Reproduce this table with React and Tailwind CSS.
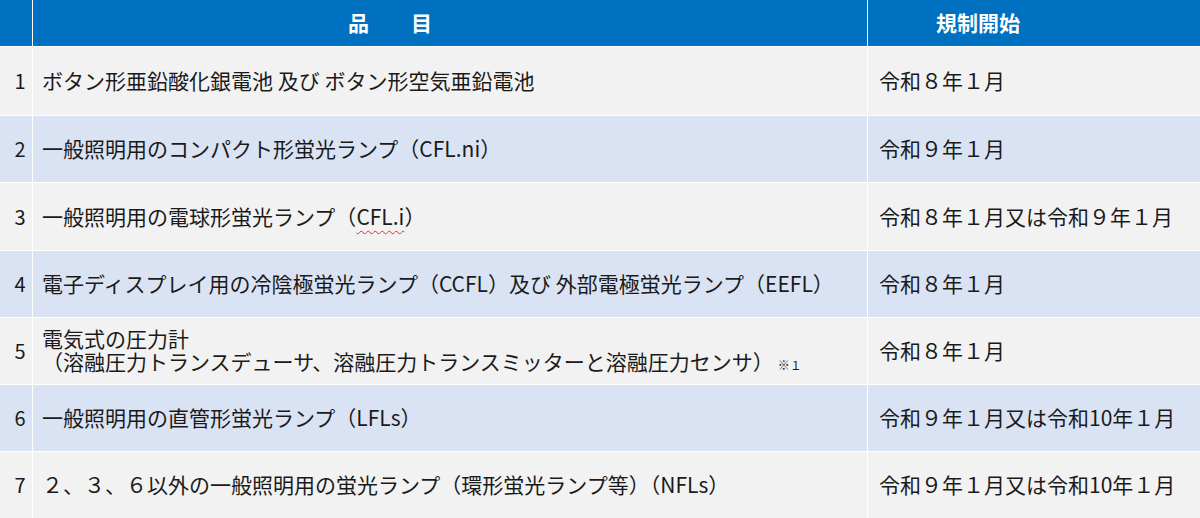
const rows = [
  { no: "1", h: "h-[68px]", bg: "bg-[#f2f2f2]", item: <>ボタン形亜鉛酸化銀電池 及び ボタン形空気亜鉛電池</>, start: "令和８年１月" },
  { no: "2", h: "h-[66px]", bg: "bg-[#dae3f3]", item: <>一般照明用のコンパクト形蛍光ランプ（CFL.ni）</>, start: "令和９年１月" },
  {
    no: "3", h: "h-[67px]", bg: "bg-[#f2f2f2]",
    item: <>一般照明用の電球形蛍光ランプ（<span className="underline decoration-wavy decoration-[#e03030] decoration-1 underline-offset-[5px]">CFL.i</span>）</>,
    start: "令和８年１月又は令和９年１月",
  },
  { no: "4", h: "h-[66px]", bg: "bg-[#dae3f3]", item: <>電子ディスプレイ用の冷陰極蛍光ランプ（CCFL）及び 外部電極蛍光ランプ（EEFL）</>, start: "令和８年１月" },
  {
    no: "5", h: "h-[66px]", bg: "bg-[#f2f2f2]",
    item: (
      <div className="leading-[23px]">
        <div>電気式の圧力計</div>
        <div>
          （溶融圧力トランスデューサ、溶融圧力トランスミッターと溶融圧力センサ）
          <span className="ml-[4px] text-[12px]">※１</span>
        </div>
      </div>
    ),
    start: "令和８年１月",
  },
  { no: "6", h: "h-[66px]", bg: "bg-[#dae3f3]", item: <>一般照明用の直管形蛍光ランプ（LFLs）</>, start: "令和９年１月又は令和10年１月" },
  { no: "7", h: "h-[66px]", bg: "bg-[#f2f2f2]", item: <>２、３、６以外の一般照明用の蛍光ランプ（環形蛍光ランプ等）（NFLs）</>, start: "令和９年１月又は令和10年１月" },
];

export default function App() {
  return (
    <div
      className="w-[1200px] h-[518px] overflow-hidden bg-white text-[#1a1a1a] text-[21px]"
      style={{ fontFamily: '"Noto Sans CJK JP", "Noto Sans", sans-serif' }}
    >
      <div className="grid grid-cols-[32px_834px_1fr] gap-px bg-white">
        <div className="h-[46px] bg-[#0070c0]" />
        <div className="h-[46px] bg-[#0070c0] flex items-center justify-center pr-[120px] text-white font-bold text-[21px] whitespace-pre">
          品　　目
        </div>
        <div className="h-[46px] bg-[#0070c0] flex items-center justify-center pr-[112px] text-white font-bold text-[21px]">
          規制開始
        </div>

        {rows.map((r) => (
          <div key={r.no} className="contents">
            <div className={`${r.h} ${r.bg} flex items-center justify-center pl-[8px] text-[20px]`}>{r.no}</div>
            <div className={`${r.h} ${r.bg} flex items-center pl-[9px] whitespace-nowrap`}>{r.item}</div>
            <div className={`${r.h} ${r.bg} flex items-center pl-[11px] whitespace-nowrap`}>{r.start}</div>
          </div>
        ))}
      </div>
    </div>
  );
}
